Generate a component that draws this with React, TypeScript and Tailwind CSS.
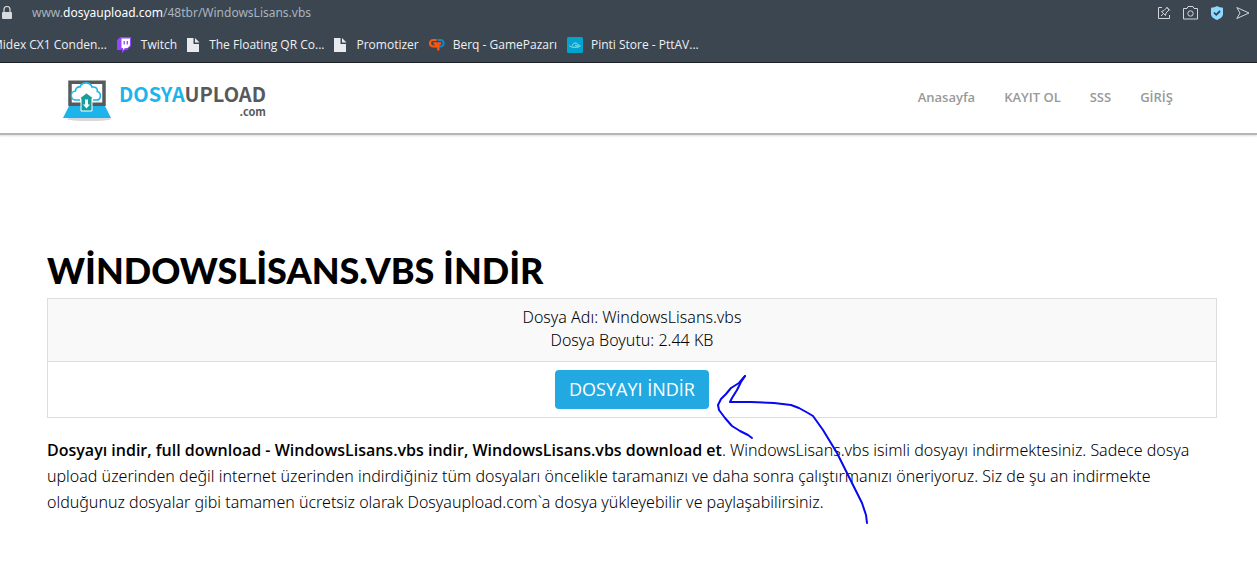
import React from "react";

const bookmarkClass = "flex shrink-0 items-center gap-2 whitespace-nowrap";

function PageIcon() {
  return (
    <svg width="14" height="16" viewBox="0 0 14 16" fill="#e8eaed" aria-hidden="true">
      <path d="M0 1h6.500v6H12v8H0z" />
      <path d="M8 1l4.500 4.500H8z" />
    </svg>
  );
}

function TwitchIcon() {
  return (
    <svg width="16" height="16" viewBox="0 0 16 16" aria-hidden="true">
      <path d="M3.500 0H14v9l-4 4H8l-3 3v-3H0V3z" fill="#9146ff" />
      <path d="M4.500 1.500H13v7L10.500 11H8l-2 2v-2h-1.500z" fill="#fff" />
      <path d="M7.200 4v3.500M10.300 4v3.500" stroke="#9146ff" strokeWidth="1.300" />
    </svg>
  );
}

function GamePazariIcon() {
  return (
    <svg width="16" height="14" viewBox="0 0 16 14" fill="none" strokeWidth="2.200" aria-hidden="true">
      <path d="M7.500 2H4.200a3 3 0 0 0 0 6.500H7V5.300H4.500" stroke="#ff5a0a" />
      <path d="M8.500 2h3a3.200 3.200 0 0 1 0 6.400H10" stroke="#1584c7" />
      <path d="M9.300 12.500V5.300H12" stroke="#ff5a0a" />
    </svg>
  );
}

function PintiIcon() {
  return (
    <svg width="16" height="16" viewBox="0 0 16 16" aria-hidden="true">
      <rect width="16" height="16" rx="1.500" fill="#00a4cf" />
      <path d="M2.500 8.800C4 10.500 11 11 13.500 9M5.500 8.500C6 5.500 9.500 5 11.500 8M8 7.800c1 1.500 3 1.500 4.500.500" fill="none" stroke="#a9e1e6" strokeWidth="1" />
    </svg>
  );
}

function BrowserBar() {
  return (
    <div className="overflow-hidden border-b border-[#10141a] bg-[#3b4651] text-xs text-[#eef0f2]">
      <div className="flex h-[25px] items-center justify-between pr-[7px]">
        <div className="flex items-center gap-5">
          <svg width="12" height="14" viewBox="0 0 12 14" aria-hidden="true">
            <path d="M4 6V3.500a3 3 0 0 1 6 0V6" fill="none" stroke="#d7dade" strokeWidth="1.200" />
            <rect x="2" y="6" width="10" height="7" rx="1" fill="#d7dade" />
          </svg>
          <span className="font-['Noto_Sans',sans-serif] text-[#a9b4be]">
            www.<span className="text-white">dosyaupload.com</span>/48tbr/WindowsLisans.vbs
          </span>
        </div>
        <div className="flex items-center gap-3">
          <button type="button" aria-label="Pin">
            <svg width="14" height="14" viewBox="0 0 14 14" fill="none" stroke="#d2d6da" aria-hidden="true">
              <path d="M5 1.500H1.500v11h11V9M4 10l2.500-2.500M4.500 5.500l4 4 .500-2.500 3-3-2-2.500-3 3zM9.500 1l3.500 3.500" />
            </svg>
          </button>
          <button type="button" aria-label="Snapshot">
            <svg width="15" height="14" viewBox="0 0 15 14" fill="none" stroke="#d2d6da" aria-hidden="true">
              <path d="M.5 2.500h3.500l1-2h5l1 2h3.500v10.500H.5z" />
              <circle cx="7.500" cy="7.500" r="2.700" />
            </svg>
          </button>
          <button type="button" aria-label="Ad blocker">
            <svg width="14" height="14" viewBox="0 0 14 14" aria-hidden="true">
              <path d="M7 0c2 1.300 4 1.500 6 1.700V8c0 3-3 4.800-6 6-3-1.200-6-3-6-6V1.700C3 1.500 5 1.300 7 0z" fill="#8fd8ff" />
              <path d="m4 6.500 2.200 2.300L10 5" fill="none" stroke="#34414d" strokeWidth="1.800" />
            </svg>
          </button>
          <button type="button" aria-label="Send">
            <svg width="14" height="14" viewBox="0 0 14 14" fill="none" stroke="#d2d6da" aria-hidden="true">
              <path d="m.8 1.500 12.200 5.500L.8 12.500 4 7z" />
            </svg>
          </button>
        </div>
      </div>
      <nav aria-label="Bookmarks" className="-ml-2 flex h-[37px] items-center gap-[10px] pt-[3px] font-['Open_Sans',sans-serif]">
        <a href="#midex" className={bookmarkClass}>Midex CX1 Conden...</a>
        <a href="#twitch" className={bookmarkClass}><TwitchIcon />Twitch</a>
        <a href="#qr" className={bookmarkClass}><PageIcon />The Floating QR Co...</a>
        <a href="#promotizer" className={bookmarkClass}><PageIcon />Promotizer</a>
        <a href="#gamepazari" className={bookmarkClass}><GamePazariIcon />Berq - GamePazarı</a>
        <a href="#pinti" className={bookmarkClass}><PintiIcon />Pinti Store - PttAV...</a>
      </nav>
    </div>
  );
}

function Logo() {
  return (
    <a href="#home" className="flex items-center gap-[7px] pt-1">
      <svg width="50" height="44" viewBox="0 0 50 44" aria-hidden="true">
        <ellipse cx="27" cy="41" rx="22" ry="2" fill="#d8d8d8" />
        <path d="M8 4.200h34v22H8z" fill="#fff" stroke="#58595b" strokeWidth="3.500" />
        <path d="M7 28h36l6 12H1z" fill="#1cb4ea" />
        <path d="M18 22h-4a4.500 4.500 0 0 1-.5-9C13.500 10 16 8.500 18 9c1.500-5 10-6 12 0 4-.5 6 2 5.300 4.500 4.500 1.500 4 8.500-1 8.500H31" fill="#fff" stroke="#1cb4ea" strokeWidth="1.600" />
        <path d="M24.500 15 32 20.500h-2V33H19V20.500h-2z" fill="#159f9a" stroke="#fff" strokeWidth="1" />
        <path d="M23 21.500h3v5h2l-3.500 4-3.500-4h2z" fill="#fff" />
      </svg>
      <span className="flex flex-col items-end font-['Noto_Sans_CJK_SC',sans-serif] font-bold text-[#58595b]">
        <span className="text-xl leading-[22px]"><span className="text-[#1cb4ea]">DOSYA</span>UPLOAD</span>
        <span className="text-[11px] leading-[12px]">.com</span>
      </span>
    </a>
  );
}

function DrawnArrow() {
  return (
    <svg className="pointer-events-none absolute left-full top-0 ml-2 overflow-visible" width="154" height="152" viewBox="0 0 154 152" fill="none" stroke="#0808f0" strokeWidth="2" strokeLinecap="round" strokeLinejoin="round" aria-hidden="true">
      <path d="M28 6 24 12 20 20 15 28 13 32H34L57 33 74 35 82 38 91 43 96 46 106 60 120 83 127 97 136 115 145 133 149 145 150 153" />
      <path d="M28 6 22 13 14 18 9 24 4 29 1 35 2 40 8 48 15 56 23 61 31 65 35 68" />
    </svg>
  );
}

export default function App() {
  return (
    <div className="min-h-screen bg-white font-['Noto_Sans',sans-serif] text-black">
      <BrowserBar />
      <header className="flex h-[72px] items-center justify-between border-b-2 border-[#b6b6b6] pl-[62px] pr-[84px] shadow-[0_1px_2px_#dddddd]">
        <Logo />
        <nav aria-label="Main" className="flex gap-[29px] font-['Open_Sans',sans-serif] text-[13px] font-semibold text-[#999999]">
          <a href="#home">Anasayfa</a>
          <a href="#register">KAYIT OL</a>
          <a href="#faq">SSS</a>
          <a href="#login">GİRİŞ</a>
        </nav>
      </header>
      <main className="pl-[47px] pr-10 pt-[110px]">
        <h1 className="mb-[3px] font-['Lato',sans-serif] text-4xl font-black leading-[50px]">WİNDOWSLİSANS.VBS İNDİR</h1>
        <section className="border border-[#dddddd] text-center">
          <div className="border-b border-[#dddddd] bg-[#f9f9f9] px-2 pb-[9px] pt-[7px] text-base font-light leading-[23px]">
            <p>Dosya Adı: WindowsLisans.vbs</p>
            <p>Dosya Boyutu: 2.44 KB</p>
          </div>
          <div className="flex justify-center py-2">
            <div className="relative">
              <button type="button" className="h-[39px] rounded bg-[#23a9e1] px-[14px] pb-[2px] font-['Open_Sans',sans-serif] text-lg text-white">DOSYAYI İNDİR</button>
              <DrawnArrow />
            </div>
          </div>
        </section>
        <p className="mt-[19px] text-base font-light leading-[26px]">
          <strong className="font-['Open_Sans',sans-serif] font-semibold">Dosyayı indir, full download - WindowsLisans.vbs indir, WindowsLisans.vbs download et</strong>. WindowsLisans.vbs isimli dosyayı indirmektesiniz. Sadece dosya{" "}
          <br className="max-lg:hidden" />
          upload üzerinden değil internet üzerinden indirdiğiniz tüm dosyaları öncelikle taramanızı ve daha sonra çalıştırmanızı öneriyoruz. Siz de şu an indirmekte{" "}
          <br className="max-lg:hidden" />
          olduğunuz dosyalar gibi tamamen ücretsiz olarak Dosyaupload.com`a dosya yükleyebilir ve paylaşabilirsiniz.
        </p>
      </main>
    </div>
  );
}
